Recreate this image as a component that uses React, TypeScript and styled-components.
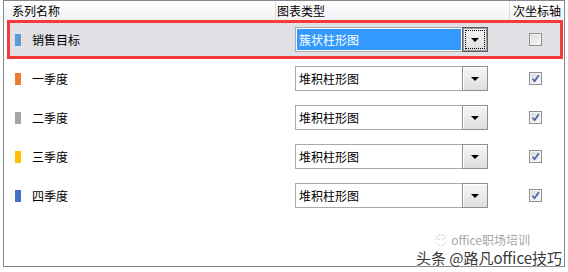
import React from "react";
import styled, { createGlobalStyle, css } from "styled-components";

const GlobalStyle = createGlobalStyle`
    html, body {
        margin: 0;
        padding: 0;
        background: #ffffff;
    }
    body {
        font-family: "Microsoft YaHei", "Noto Sans CJK SC", sans-serif;
        font-size: 12px;
        color: #000;
    }
`;

interface SeriesRow {
    name: string;
    color: string;
    chartType: string;
    secondary: boolean;
}

const rows: SeriesRow[] = [
    { name: "销售目标", color: "#5b9bd5", chartType: "簇状柱形图", secondary: false },
    { name: "一季度", color: "#ed7d31", chartType: "堆积柱形图", secondary: true },
    { name: "二季度", color: "#a5a5a5", chartType: "堆积柱形图", secondary: true },
    { name: "三季度", color: "#ffc000", chartType: "堆积柱形图", secondary: true },
    { name: "四季度", color: "#4472c4", chartType: "堆积柱形图", secondary: true },
];

const Panel = styled.div`
    position: relative;
    box-sizing: border-box;
    margin-left: 3px;
    width: 562px;
    height: 267px;
    border: 1px solid #828790;
    background: #fff;
`;

const Header = styled.div`
    display: grid;
    grid-template-columns: 272px 234px 1fr;
    height: 19px;
    background: linear-gradient(#ffffff, #f1f2f4);
`;

const HeaderCell = styled.div<{ $pad: number; $last?: boolean }>`
    box-sizing: border-box;
    padding-left: ${({ $pad }) => $pad}px;
    line-height: 19px;
    white-space: nowrap;
    border-right: ${({ $last }) => ($last ? "none" : "1px solid #dcdde0")};
`;

const Row = styled.div<{ $selected?: boolean }>`
    position: relative;
    display: grid;
    grid-template-columns: 291px 193px 1fr;
    align-items: center;
    height: 39px;

    ${({ $selected }) => $selected && css`
        &::before {
            content: "";
            position: absolute;
            left: 3px;
            right: 1px;
            top: 0;
            bottom: 0;
            background: #e1e0e5;
            border: 3px solid #f53a3a;
        }
    `}

    & > * {
        position: relative;
    }
`;

const NameCell = styled.div`
    display: flex;
    align-items: center;
    gap: 11px;
    padding-left: 11px;
`;

const Swatch = styled.span<{ $color: string }>`
    width: 6px;
    height: 12px;
    background: ${({ $color }) => $color};
`;

const Label = styled.span`
    line-height: 14px;
`;

const Combo = styled.div`
    box-sizing: border-box;
    display: flex;
    height: 25px;
    border: 1px solid #a9a9a9;
    background: #fff;
`;

const ComboField = styled.div<{ $selected?: boolean }>`
    flex: 1;
    margin: 1px;
    padding-left: 2px;
    line-height: 21px;
    white-space: nowrap;
    ${({ $selected }) => $selected && css`
        background: #3399ff;
        color: #fff;
    `}
`;

const ComboButton = styled.div<{ $focused?: boolean }>`
    box-sizing: border-box;
    width: 26px;
    margin: -1px -1px -1px 0;
    display: flex;
    align-items: center;
    justify-content: center;
    border: 1px solid ${({ $focused }) => ($focused ? "#5f5f5f" : "#8e8e8e")};
    box-shadow: inset 1px 1px 0 #ffffff;
    background: linear-gradient(#f7f7f7, #dddddd);
    ${({ $focused }) => $focused && css`
        box-shadow: inset 0 0 0 1px #9a9a9a;
        outline: 1px dotted #000;
        outline-offset: -4px;
    `}

    &::after {
        content: "";
        border-top: 4px solid #000;
        border-left: 4px solid transparent;
        border-right: 4px solid transparent;
        margin-top: 1px;
    }
`;

const CheckCell = styled.div`
    padding-left: 41px;
    display: flex;
`;

const Check = styled.span`
    box-sizing: border-box;
    width: 13px;
    height: 13px;
    border: 1px solid #8f8f8f;
    box-shadow: inset 0 0 0 1px #f4f4f4;
    background: linear-gradient(135deg, #d8d8d8, #fafafa);
    display: flex;
    align-items: center;
    justify-content: center;
`;

const Watermark = styled.div`
    position: absolute;
    right: 2px;
    bottom: 0;
    display: flex;
    flex-direction: column;
    align-items: flex-end;
    gap: 3px;
    pointer-events: none;
`;

const WatermarkTop = styled.div`
    display: flex;
    align-items: center;
    gap: 3px;
    margin-right: 32px;
    height: 13px;
    color: #a7a7a7;
    font-size: 12px;
    line-height: 13px;
`;

const WatermarkBottom = styled.div`
    color: #3a3a3a;
    font-size: 15px;
    line-height: 17px;
    white-space: nowrap;
    text-shadow: 0 0 2px #fff, 0 0 2px #fff;
`;

function CheckMark() {
    return (
        <svg width="9" height="9" viewBox="0 0 9 9">
            <path d="M1.5 4.8 L3.6 7.2 L7.8 1.2" fill="none" stroke="#4a5ea6" strokeWidth="1.7" />
        </svg>
    );
}

function ChatIcon() {
    return (
        <svg width="14" height="12" viewBox="0 0 14 12">
            <path d="M2 6 A5 4.5 0 0 1 12 5" fill="none" stroke="#c4c4c4" strokeWidth="1" strokeDasharray="1.5 1" />
            <path d="M3 9 A4 3 0 0 0 11 8" fill="none" stroke="#c4c4c4" strokeWidth="1" strokeDasharray="1.5 1" />
            <circle cx="5" cy="5" r="0.8" fill="#c4c4c4" />
            <circle cx="9" cy="5" r="0.8" fill="#c4c4c4" />
        </svg>
    );
}

export default function App() {
    return (
        <>
            <GlobalStyle />
            <Panel>
                <Header>
                    <HeaderCell $pad={8}>系列名称</HeaderCell>
                    <HeaderCell $pad={1}>图表类型</HeaderCell>
                    <HeaderCell $pad={3} $last>次坐标轴</HeaderCell>
                </Header>
                {rows.map((row, i) => {
                    const selected = i === 0;
                    return (
                        <Row key={row.name} $selected={selected}>
                            <NameCell>
                                <Swatch $color={row.color} />
                                <Label>{row.name}</Label>
                            </NameCell>
                            <Combo>
                                <ComboField $selected={selected}>{row.chartType}</ComboField>
                                <ComboButton $focused={selected} />
                            </Combo>
                            <CheckCell>
                                <Check>{row.secondary && <CheckMark />}</Check>
                            </CheckCell>
                        </Row>
                    );
                })}
                <Watermark>
                    <WatermarkTop>
                        <ChatIcon />
                        <span>office职场培训</span>
                    </WatermarkTop>
                    <WatermarkBottom>头条 @路凡office技巧</WatermarkBottom>
                </Watermark>
            </Panel>
        </>
    );
}
